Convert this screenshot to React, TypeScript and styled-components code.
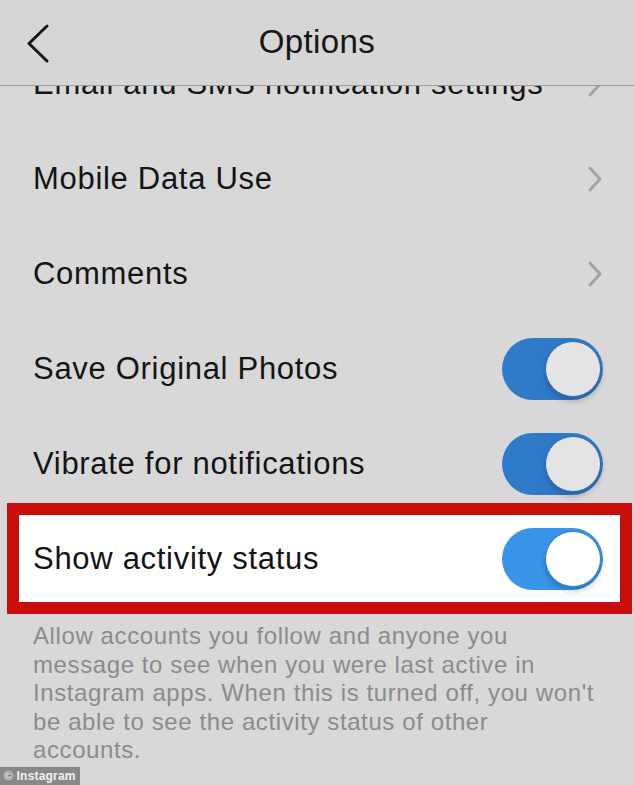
import React from "react";
import styled, { createGlobalStyle } from "styled-components";

const Global = createGlobalStyle`
  html, body { margin: 0; padding: 0; background: #d8d8d8; overflow: hidden; }
  body { font-family: "Liberation Sans", Arial, sans-serif; }
`;

const Page = styled.div`
  position: relative;
  width: 634px;
  height: 785px;
  background: #d8d8d8;
  overflow: hidden;
  display: flex;
  flex-direction: column;
`;

const Header = styled.header`
  position: relative;
  z-index: 2;
  height: 85px;
  flex: none;
  display: grid;
  grid-template-columns: 80px 1fr 80px;
  align-items: center;
  background: #d6d6d6;
  border-bottom: 1px solid #9c9c9c;
`;

const BackButton = styled.button`
  border: 0;
  background: none;
  padding: 0 0 0 26px;
  height: 100%;
  display: flex;
  align-items: center;
`;

const Title = styled.h1`
  margin: 0;
  text-align: center;
  font-size: 33px;
  font-weight: 400;
  letter-spacing: 0.4px;
  color: #151515;
  padding-bottom: 2px;
`;

const Viewport = styled.div`
  flex: 1;
  overflow: hidden;
`;

const List = styled.div`
  margin-top: -50px;
  display: flex;
  flex-direction: column;
`;

const Row = styled.div`
  height: 95px;
  display: flex;
  align-items: center;
  justify-content: space-between;
  padding: 0 31px 0 33px;
  box-sizing: border-box;
`;

const Highlight = styled.div`
  margin: -8px 2px 0 7px;
  border: 12px solid #c90d0d;
  background: #ffffff;
  height: 87px;
  display: flex;
  align-items: center;
  justify-content: space-between;
  padding: 0 17px 0 14px;
`;

const Label = styled.span`
  font-size: 31px;
  letter-spacing: 0.7px;
  color: #141414;
  white-space: nowrap;
`;

const Track = styled.div<{ $bright?: boolean }>`
  width: 101px;
  height: 62px;
  border-radius: 31px;
  background: ${(p) => (p.$bright ? "#3a94ea" : "#2f7bca")};
  display: flex;
  align-items: center;
  justify-content: flex-end;
  padding: 0 2px;
  box-sizing: border-box;
`;

const Knob = styled.div<{ $bright?: boolean }>`
  width: 56px;
  height: 56px;
  border-radius: 50%;
  background: ${(p) => (p.$bright ? "#ffffff" : "#e4e4e4")};
  border: 1.5px solid ${(p) => (p.$bright ? "#3180cf" : "#2a6cb0")};
  box-sizing: border-box;
  box-shadow: 0 4px 6px rgba(0, 0, 0, 0.22);
`;

const Note = styled.p`
  margin: 0;
  padding: 8px 35px 0 33px;
  font-size: 24px;
  line-height: 28.6px;
  letter-spacing: 0.6px;
  color: #8b8b8b;
`;

const Watermark = styled.div`
  position: absolute;
  left: 0;
  bottom: 0;
  height: 18px;
  padding: 0 4px;
  background: rgba(110, 110, 110, 0.75);
  color: #f2f2f2;
  font-size: 12px;
  font-weight: 700;
  line-height: 18px;
  letter-spacing: 0.2px;
`;

const Chevron = () => (
  <svg width="16" height="26" viewBox="0 0 16 26">
    <polyline points="3,2 13,13 3,24" fill="none" stroke="#a3a3a3" strokeWidth="3" strokeLinecap="round" strokeLinejoin="round" />
  </svg>
);

const BackIcon = () => (
  <svg width="24" height="40" viewBox="0 0 24 40">
    <polyline points="21,3 3,20.5 21,38" fill="none" stroke="#161616" strokeWidth="3" strokeLinecap="round" strokeLinejoin="round" />
  </svg>
);

const Toggle = ({ bright }: { bright?: boolean }) => (
  <Track $bright={bright}>
    <Knob $bright={bright} />
  </Track>
);

export default function App() {
  return (
    <>
      <Global />
      <Page>
        <Header>
          <BackButton aria-label="Back">
            <BackIcon />
          </BackButton>
          <Title>Options</Title>
          <div />
        </Header>
        <Viewport>
          <List>
            <Row>
              <Label>Email and SMS notification settings</Label>
              <Chevron />
            </Row>
            <Row>
              <Label>Mobile Data Use</Label>
              <Chevron />
            </Row>
            <Row>
              <Label>Comments</Label>
              <Chevron />
            </Row>
            <Row>
              <Label>Save Original Photos</Label>
              <Toggle />
            </Row>
            <Row>
              <Label>Vibrate for notifications</Label>
              <Toggle />
            </Row>
            <Highlight>
              <Label>Show activity status</Label>
              <Toggle bright />
            </Highlight>
            <Note>
              Allow accounts you follow and anyone you message to see when you were last active in Instagram apps. When this is turned off, you won't be able to see the activity status of other accounts.
            </Note>
          </List>
        </Viewport>
        <Watermark>© Instagram</Watermark>
      </Page>
    </>
  );
}
